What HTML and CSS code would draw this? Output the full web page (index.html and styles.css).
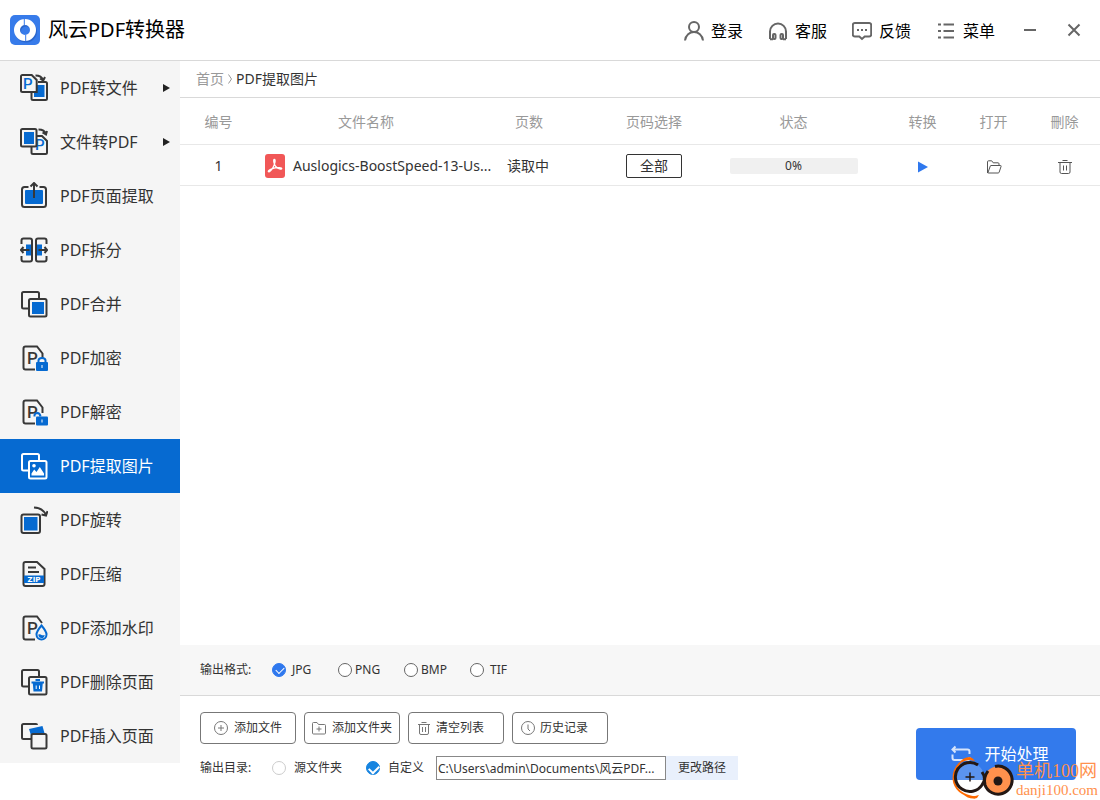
FILE: index.html
```html
<!DOCTYPE html>
<html lang="zh-CN">
<head>
<meta charset="utf-8">
<meta name="viewport" content="width=device-width, initial-scale=1">
<title>风云PDF转换器</title>
<link rel="stylesheet" href="styles.css">
</head>
<body>
<div class="app">
  <header class="topbar">
    <svg class="logo" viewBox="0 0 30 30" aria-hidden="true">
      <rect width="30" height="30" rx="5" fill="#377bea"/>
      <circle cx="16" cy="16.500" r="8" fill="none" stroke="#2a66cc" stroke-width="6"/>
      <circle cx="15" cy="15" r="8" fill="none" stroke="#fff" stroke-width="6"/>
      <path d="M14.300 3.500v6.500M15.700 20v6.500" stroke="#377bea" stroke-width="1"/>
    </svg>
    <h1 class="title">风云PDF转换器</h1>
    <nav class="toplinks" aria-label="工具">
      <button class="toplink" type="button"><svg class="ic20" viewBox="1 1 20 20"><circle cx="11" cy="7" r="5"/><path d="M2 20.500c.6-5.500 4.700-8.500 9-8.500s8.400 3 9 8.500"/></svg>登录</button>
      <button class="toplink" type="button"><svg class="ic20" viewBox="1 1 20 20"><path d="M3 19v-7.500a8 8 0 0 1 16 0V19"/><rect x="6" y="14" width="2.500" height="5" rx="1"/><rect x="13.500" y="14" width="2.500" height="5" rx="1"/><path d="M3 19.200h3M16 19.200h3"/></svg>客服</button>
      <button class="toplink" type="button"><svg class="ic20" viewBox="1 1 20 20"><path d="M3.800 3h14.400q2 0 2 2v9.500q0 2-2 2h-4.500L11 19l-2.700-2.500H3.800q-2 0-2-2V5q0-2 2-2z"/><path d="M6 10h2M10 10h2M14 10h2"/></svg>反馈</button>
      <button class="toplink" type="button"><svg class="ic20" viewBox="1 1 20 20"><path d="M3 4.500h3M3 11h3M3 17.500h3M8.500 4.500H19M8.500 11H19M8.500 17.500H19"/></svg>菜单</button>
    </nav>
    <div class="wincontrols">
      <button class="winbtn" type="button" aria-label="最小化"><svg class="ic14" viewBox="0 0 14 14"><path d="M1 7h12"/></svg></button>
      <button class="winbtn" type="button" aria-label="关闭"><svg class="ic14" viewBox="0 0 14 14"><path d="M1.500 1.500l11 11M12.500 1.500l-11 11"/></svg></button>
    </div>
  </header>

  <div class="body">
    <nav class="sidebar" aria-label="功能">
      <a class="item" href="#"><svg class="icon" viewBox="0 0 28 28"><path class="d" d="M18 8h7.500q1.500 0 1.500 1.500v15q0 1.500-1.500 1.500H13q-1.500 0-1.500-1.500V18"/><rect class="b" x="14" y="11" width="10.500" height="12"/><path class="d bg" d="M2.500 1h9.200l5 5v12h-14.200q-1.500 0-1.500-1.500v-14Q1 1 2.500 1z"/><text class="p blue" x="3" y="14.500">P</text><path class="d" d="M15.500 1.500q6 0 7.500 4.500M20 4.500l3.200 2 1.800-3.500"/></svg>PDF转文件<span class="caret"></span></a>
      <a class="item" href="#"><svg class="icon" viewBox="0 0 28 28"><path class="d bg" d="M13 8h9l5 5v11.500q0 1.500-1.500 1.500H13q-1.500 0-1.500-1.500V9.500"/><text class="p blue" x="15" y="22">P</text><rect class="d bg" x="1" y="1" width="15.500" height="17.500" rx="1.500"/><rect class="b" x="4" y="4" width="10" height="12"/><path class="d" d="M18.500 1.500q6 0 7.500 4.500M22.500 4.500l3.500 2 1-3.500"/></svg>文件转PDF<span class="caret"></span></a>
      <a class="item" href="#"><svg class="icon" viewBox="0 0 28 28"><rect class="b" x="5" y="8" width="18" height="14" rx="1"/><path class="d" d="M8.500 5H4.500Q2 5 2 7.500v15Q2 25 4.500 25h19q2.500 0 2.500-2.500v-15Q26 5 23.500 5h-4"/><path class="d" d="M14 16V1M10.500 4.500L14 1l3.500 3.500"/></svg>PDF页面提取</a>
      <a class="item" href="#"><svg class="icon" viewBox="0 0 28 28"><path class="b" d="M6 8.500h6v11H6zM16 8.500h6v11h-6z"/><path class="d" d="M1.500 8V4.500Q1.500 2.500 3.500 2.500h6.500q2 0 2 2v19q0 2-2 2H3.500q-2 0-2-2V20M26.500 8V4.500q0-2-2-2H18q-2 0-2 2v19q0 2 2 2h6.500q2 0 2-2V20M9.500 14H.8M3.500 11L.8 14l2.700 3M18.500 14h8.700M24.500 11l2.700 3-2.700 3"/></svg>PDF拆分</a>
      <a class="item" href="#"><svg class="icon" viewBox="0 0 28 28"><path class="d" d="M8.500 18.500H3.500Q2 18.500 2 17V3.500Q2 2 3.500 2h14Q19 2 19 3.500V9"/><rect class="d" x="9" y="9" width="17.500" height="17.500" rx="1.500"/><rect class="b" x="12" y="12" width="12" height="12"/></svg>PDF合并</a>
      <a class="item" href="#"><svg class="icon" viewBox="0 0 28 28"><path class="d" d="M15 25.500H5.500q-2 0-2-2V4.500q0-2 2-2H17l5.500 7V14"/><text class="p big" x="7" y="20">P</text><rect class="b" x="16" y="18" width="12" height="9" rx="1"/><path class="s" d="M18.500 18v-1.500q0-2.500 3.500-2.500t3.500 2.500V18"/><path class="w" d="M22 21v3"/></svg>PDF加密</a>
      <a class="item" href="#"><svg class="icon" viewBox="0 0 28 28"><path class="d" d="M15 25.500H5.500q-2 0-2-2V4.500q0-2 2-2H17l5.500 7V15"/><text class="p big" x="7" y="20">P</text><rect class="b" x="16" y="18.500" width="12" height="9" rx="1"/><path class="s" d="M14.500 18.500V17q.5-2 3-2 2.500.2 3 3.500"/><path class="w" d="M22 21.500v3"/></svg>PDF解密</a>
      <a class="item active" href="#" aria-current="page"><svg class="icon" viewBox="0 0 28 28"><path class="d" d="M8.500 18.500H3.500Q2 18.500 2 17V3.500Q2 2 3.500 2h14Q19 2 19 3.500V9"/><rect class="d" x="9" y="9" width="17.500" height="17.500" rx="1.500"/><circle cx="14" cy="13.800" r="1.800" fill="#fff"/><path d="M11.500 23.500v-2l2.700-4 2.300 2.500 3.300-5 4.200 6.500v2z" fill="#fff"/></svg>PDF提取图片</a>
      <a class="item" href="#"><svg class="icon" viewBox="0 0 28 28"><rect class="d" x="1.500" y="8.500" width="18.500" height="18.500" rx="2"/><rect class="b" x="4" y="11" width="13.500" height="13.500"/><path class="d" d="M14 1.500q9 .5 12 7.500M21.500 8.500L26 9.500l1.500-4.500"/></svg>PDF旋转</a>
      <a class="item" href="#"><svg class="icon" viewBox="0 0 28 28"><path class="d" d="M5.500 2H17l7.500 7v15q0 2-2 2h-17q-2 0-2-2V4q0-2 2-2zM8 7.500h8M8 12h11"/><path class="b" d="M4 15.500h20V23H4z"/><text class="zip" x="14" y="21.800">ZIP</text></svg>PDF压缩</a>
      <a class="item" href="#"><svg class="icon" viewBox="0 0 28 28"><path class="d" d="M15 25.500H5.500q-2 0-2-2V4.500q0-2 2-2H17l5 6.500"/><text class="p big" x="7" y="20">P</text><path class="s bg" d="M21.500 11.500q5 6 5 9a5 5 0 0 1-10 0q0-3 5-9z"/><path class="b" d="M18.300 20.500q2-.5 3.200.4 1.300.8 3.200 0-.2 3.100-3.200 3.100t-3.200-3.500z"/></svg>PDF添加水印</a>
      <a class="item" href="#"><svg class="icon" viewBox="0 0 28 28"><path class="d" d="M8.500 18.500H3.500Q2 18.500 2 17V3.500Q2 2 3.500 2h14Q19 2 19 3.500V9"/><rect class="d" x="9" y="9" width="17.500" height="17.500" rx="1.500"/><path class="s" d="M11.500 14.500H24M15.500 12h4.500"/><path class="b" d="M12.800 15h10l-.8 8.500h-8.500z"/><path class="w" d="M16.200 17.500v3.500M19.500 17.500v3.500"/></svg>PDF删除页面</a>
      <a class="item" href="#"><svg class="icon" viewBox="0 0 28 28"><path class="d" d="M11 17H3.500Q2 17 2 15.500v-12Q2 2 3.500 2h12.500q1 0 1 1"/><path class="b" d="M9 7l13.500-3 2.500 9-13 3.500z"/><rect class="d bg" x="11.500" y="12" width="15" height="14.500" rx="1.500"/></svg>PDF插入页面</a>
    </nav>

    <main class="main">
      <div class="crumbs"><a class="crumb" href="#">首页</a><svg class="chev" viewBox="0 0 6 12"><path d="M1.500 1.500L4.500 6l-3 4.500"/></svg><span>PDF提取图片</span></div>

      <table class="files">
        <thead>
          <tr><th class="c-no">编号</th><th class="c-name">文件名称</th><th class="c-pages">页数</th><th class="c-range">页码选择</th><th class="c-state">状态</th><th class="c-act">转换</th><th class="c-act">打开</th><th class="c-act">刪除</th></tr>
        </thead>
        <tbody>
          <tr>
            <td>1</td>
            <td class="c-name"><span class="file"><svg class="pdf" viewBox="0 0 20 24"><rect width="20" height="24" rx="3" fill="#f15757"/><path d="M9.300 5.500c1.600 0 .6 4.500-1.300 8-1.700 3.200-4 5-4.600 4.200-.8-1.200 3.200-3.200 6.600-3.800 3.300-.6 6.800-.4 6.800.6 0 1.300-3.700.5-5.800-1.800-2-2.200-3-7.200-1.700-7.200z" fill="none" stroke="#fff" stroke-width="1.300"/></svg><span>Auslogics-BoostSpeed-13-Us...</span></span></td>
            <td class="c-pages">读取中</td>
            <td><button class="all" type="button">全部</button></td>
            <td><div class="progress" role="progressbar" aria-label="状态" aria-valuenow="0" aria-valuemin="0" aria-valuemax="100">0%</div></td>
            <td><button class="act" type="button" aria-label="转换"><svg class="ic16" viewBox="0 0 16 16"><path d="M3 2.500v11L13 8z" fill="#2f78ee" stroke="none"/></svg></button></td>
            <td><button class="act" type="button" aria-label="打开"><svg class="ic16" viewBox="0 0 16 16"><path d="M1.500 14V2.800q0-1 1-1h3.200l1.500 2h4.800q1 0 1 1V6.500M1.800 14L4.300 7q.2-.5.700-.5h9.500q.8 0 .6.800l-1.900 5.800q-.3.900-1 .9H2.500q-1 0-1-.5z"/></svg></button></td>
            <td><button class="act" type="button" aria-label="刪除"><svg class="ic16" viewBox="0 0 16 16"><path d="M1 3.500h14M5.500 1.500h5M3 3.500v9.500q0 1.500 1.500 1.500h7q1.500 0 1.500-1.500V3.500M6.500 6.500v5M9.500 6.500v5"/></svg></button></td>
          </tr>
        </tbody>
      </table>

      <div class="formats" role="radiogroup" aria-label="输出格式">
        <span class="caption">输出格式:</span>
        <label class="fmt wide"><input class="radio" type="radio" name="fmt" checked>JPG</label>
        <label class="fmt"><input class="radio" type="radio" name="fmt">PNG</label>
        <label class="fmt"><input class="radio" type="radio" name="fmt">BMP</label>
        <label class="fmt wide"><input class="radio" type="radio" name="fmt">TIF</label>
      </div>

      <footer class="footer">
        <div class="controls">
          <div class="buttons">
            <button class="btn" type="button"><svg class="ic14 thin" viewBox="0 0 14 14"><circle cx="7" cy="7" r="6.500"/><path d="M4 7h6M7 4v6"/></svg>添加文件</button>
            <button class="btn" type="button"><svg class="ic14 thin" viewBox="0 0 14 14"><path d="M.5 12V2.500q0-1 1-1H5l1.500 2h6q1 0 1 1V12q0 1-1 1h-11q-1 0-1-1zM4.500 8h5M7 5.500v5"/></svg>添加文件夹</button>
            <button class="btn tight" type="button"><svg class="ic14 thin" viewBox="0 0 14 14"><path d="M1 3.500h12M4.500 1.500h5M2.500 3.500V12q0 1.500 1.500 1.500h6q1.500 0 1.500-1.500V3.500M5.500 6v5M8.500 6v5"/></svg>清空列表</button>
            <button class="btn tight" type="button"><svg class="ic14 thin" viewBox="0 0 14 14"><circle cx="7" cy="7" r="6.500"/><path d="M7 3.500V8l2 2"/></svg>历史记录</button>
          </div>
          <div class="output" role="radiogroup" aria-label="输出目录">
            <span class="caption">输出目录:</span>
            <label class="dir"><input class="radio pale" type="radio" name="dir">源文件夹</label>
            <label class="dir custom"><input class="radio sky" type="radio" name="dir" checked>自定义</label>
            <input class="path" type="text" aria-label="输出路径" value="C:\Users\admin\Documents\风云PDF..." readonly>
            <button class="change" type="button">更改路径</button>
          </div>
        </div>
        <button class="start" type="button"><svg class="loop" viewBox="0 0 20 18"><path d="M1.500 4.500h15q2 0 2 2V9M4.500 1.500l-3 3 3 3M1.500 9.500V13q0 2 2 2h15M18.500 12v3"/></svg>开始处理</button>
      </footer>
    </main>
  </div>

  <div class="mark" aria-hidden="true">
    <svg class="marklogo" viewBox="0 0 64 44">
      <path d="M9 7Q2 14 2.500 23 4 38 24 41.500" fill="none" stroke="#ff6a00" stroke-width="2"/>
      <path d="M7 9Q11 1 19 1q3 1 5 4l-5-1q-6 0-12 5zM12 38q7 4 16 1l-2 3q-8 2-14-4z" fill="#ff6a00"/>
      <circle cx="19" cy="21" r="14" fill="#fff" fill-opacity=".2"/>
      <path d="M27 9A14.500 14.500 0 1 0 31 29Q36 23 31 16" fill="none" stroke="#231815" stroke-width="3"/>
      <path d="M14.500 21h9M19 16.500v9" stroke="#231815" stroke-width="1.500"/>
      <circle cx="47" cy="24.500" r="14" fill="#ff914d"/>
      <path d="M44 10.500A14 14 0 1 1 34 29Q32 22 37 15" fill="none" stroke="#231815" stroke-width="3"/>
      <circle cx="47" cy="25" r="4.500" fill="#231815"/>
    </svg>
    <div class="marktext"><span class="markcn">单机100网</span><span class="markurl">danji100.com</span></div>
  </div>
</div>
</body>
</html>
```
FILE: styles.css
```css
* { box-sizing: border-box; }
body {
  margin: 0;
  font: 14px/20px "Noto Sans", "Noto Sans CJK SC", sans-serif;
  color: #333;
  background: #fff;
}
button, input { font: inherit; color: inherit; margin: 0; }
button { padding: 0; border: 0; background: none; cursor: pointer; }
a { color: inherit; text-decoration: none; }
svg { flex: none; display: block; }

.app { position: relative; min-height: 100vh; display: flex; flex-direction: column; }

.topbar {
  display: flex;
  align-items: center;
  height: 61px;
  padding: 0 16px 0 10px;
  border-bottom: 1px solid #d9d9d9;
  color: #000;
}
.logo { width: 30px; height: 30px; }
.title { margin: 0 auto 0 8px; font-size: 20px; line-height: 28px; font-weight: 400; }
.toplinks { display: flex; gap: 25px; padding-top: 2px; }
.toplink { display: flex; align-items: center; gap: 7px; font-size: 16px; line-height: 24px; }
.ic20 { width: 20px; height: 20px; fill: none; stroke: #666; stroke-width: 2; }
.wincontrols { display: flex; gap: 24px; margin-left: 25px; }
.winbtn { display: flex; align-items: center; justify-content: center; width: 20px; height: 20px; }
.ic14 { width: 14px; height: 14px; fill: none; stroke: #666; stroke-width: 2; }

.body { flex: 1; display: flex; }
.sidebar { width: 180px; flex: none; align-self: flex-start; background: #f5f5f5; }
.item {
  display: flex;
  align-items: center;
  gap: 12px;
  height: 54px;
  padding: 0 10px 0 20px;
  font-size: 16px;
  line-height: 24px;
  white-space: nowrap;
}
.item.active { background: #066ad1; color: #fff; }
.icon { width: 28px; height: 28px; fill: none; }
.icon .d { stroke: #383838; stroke-width: 2; }
.active .icon .d { stroke: #fff; }
.icon .b { fill: #066ad1; }
.icon .s { stroke: #066ad1; stroke-width: 2; }
.icon .w { stroke: #fff; stroke-width: 1; }
.icon .bg { fill: #f5f5f5; }
.icon .p { font: 500 15px Roboto, sans-serif; fill: #383838; }
.icon .big { font-size: 17px; }
.icon .blue { fill: #066ad1; }
.icon .zip { font: 700 7px "DejaVu Sans", sans-serif; fill: #fff; text-anchor: middle; }
.caret { margin-left: auto; border: 4px solid transparent; border-left: 7px solid #222; border-right: 0; }

.main { flex: 1; min-width: 0; display: flex; flex-direction: column; }
.crumbs { display: flex; align-items: center; gap: 3px; height: 37px; padding: 0 16px; border-bottom: 1px solid #d9d9d9; }
.crumb { color: #999; }
.chev { width: 6px; height: 12px; fill: none; stroke: #999; stroke-width: 1; }

.files { width: 100%; table-layout: fixed; border-collapse: separate; border-spacing: 0; text-align: center; }
.files th, .files td { padding: 1px 0 0; border-bottom: 1px solid #e8e8e8; }
.files th { height: 47px; font-weight: 400; color: #999; }
.files td { height: 41px; }
.c-no { width: 77px; }
.files th.c-name { padding-right: 26px; }
.files .c-pages { width: 107px; text-align: left; }
.files th.c-pages { padding-left: 14px; }
.files td.c-pages { padding-left: 6px; }
.c-range { width: 92px; }
.c-state { width: 187px; }
.c-act { width: 71px; }
.file { display: flex; align-items: center; gap: 8px; padding-left: 8px; white-space: nowrap; }
.pdf { width: 20px; height: 24px; }
.all { width: 56px; height: 24px; border: 1px solid #333; border-radius: 2px; background: #fff; vertical-align: middle; }
.progress { width: 128px; height: 16px; margin: 0 auto; border-radius: 2px; background: #f0f0f0; font-size: 12px; line-height: 16px; }
.act { vertical-align: middle; }
.ic16 { width: 16px; height: 16px; fill: none; stroke: #555; stroke-width: 1; }

.formats {
  display: flex;
  align-items: center;
  height: 51px;
  margin-top: auto;
  padding: 0 20px;
  background: #f7f7f7;
  border-bottom: 1px solid #d9d9d9;
  font-size: 12px;
}
.caption { width: 72px; flex: none; }
.fmt { display: flex; align-items: center; gap: 3px; width: 66px; }
.fmt.wide { gap: 6px; }
.radio {
  appearance: none;
  flex: none;
  width: 14px;
  height: 14px;
  border: 1px solid #666;
  border-radius: 50%;
  background: #fff;
}
.radio.pale { border-color: #ccc; }
.radio:checked { position: relative; border-color: #2f78ee; background: #2f78ee; }
.radio.sky:checked { border-color: #1684e0; background: #1684e0; }
.radio:checked::after {
  content: "";
  position: absolute;
  left: 3px;
  top: 3px;
  width: 7px;
  height: 4px;
  border: solid #fff;
  border-width: 0 0 1px 1px;
  transform: rotate(-45deg);
}
.radio.sky:checked::after { left: 2px; width: 8px; height: 5px; border-width: 0 0 2px 2px; }

.footer { display: flex; align-items: flex-end; justify-content: space-between; height: 104px; padding: 16px 24px 20px 20px; font-size: 12px; }
.controls { display: flex; flex-direction: column; gap: 12px; }
.buttons { display: flex; gap: 8px; }
.btn {
  display: flex;
  align-items: center;
  justify-content: center;
  gap: 6px;
  width: 96px;
  height: 32px;
  border: 1px solid #777;
  border-radius: 4px;
  white-space: nowrap;
}
.btn.tight { justify-content: flex-start; gap: 5px; padding-left: 8px; }
.thin { stroke: #777; stroke-width: 1; }
.output { display: flex; align-items: center; height: 24px; white-space: nowrap; }
.dir { display: flex; align-items: center; gap: 8px; width: 94px; }
.dir.custom { width: 70px; }
.path { width: 230px; height: 24px; padding: 0 1px; border: 1px solid #888; background: #fff; }
.change { width: 72px; height: 24px; background: #e9f0fc; }
.start {
  display: flex;
  align-items: center;
  justify-content: center;
  gap: 13px;
  width: 160px;
  height: 52px;
  padding-left: 8px;
  border-radius: 4px;
  background: #337aec;
  color: #fff;
  font-size: 16px;
  line-height: 16px;
}
.loop { width: 20px; height: 18px; fill: none; stroke: #fff; stroke-width: 2; opacity: .8; }

.mark { position: absolute; right: 2px; bottom: 0; display: flex; align-items: flex-end; gap: 1px; pointer-events: none; color: #ff914d; }
.marklogo { width: 64px; height: 44px; }
.marktext { display: flex; flex-direction: column; white-space: nowrap; font-family: "Liberation Serif", "Noto Sans CJK SC", serif; }
.markcn { font-size: 18px; line-height: 18px; }
.markurl { font-size: 15px; line-height: 20px; }
```
